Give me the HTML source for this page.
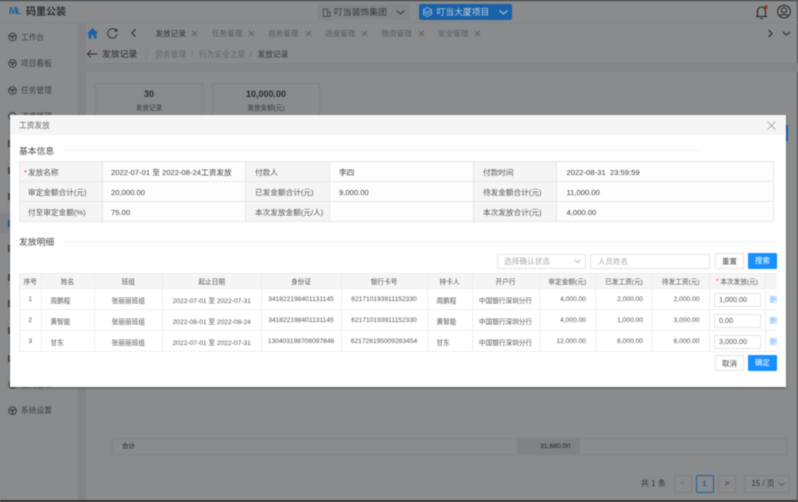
<!DOCTYPE html>
<html lang="zh"><head><meta charset="utf-8"><style>
*{box-sizing:border-box}
html,body{margin:0;padding:0}
body{width:798px;height:502px;overflow:hidden;background:#8a8b8d;position:relative;font-family:"Liberation Sans","Noto Sans CJK SC",sans-serif;color:#333}
#w{position:absolute;left:0;top:0;width:798px;height:502px;filter:blur(.5px);overflow:hidden}
.a{position:absolute;white-space:nowrap}
.c{position:absolute;white-space:nowrap;display:flex;align-items:center;overflow:hidden}
svg{position:absolute;overflow:visible}
.nav{color:#3d3e40;font-size:7.7px;left:21px;line-height:10px}
.ic{fill:none;stroke:#333;stroke-width:.9}
.tab{color:#5a5b5e;font-size:7.6px;top:28px;line-height:11px}
.x{fill:none;stroke:#55565a;stroke-width:.8}
.cell{background:#fdfdfd;border-right:1px solid #e8e8e8;border-bottom:1px solid #e8e8e8;font-size:7.65px;color:#444;padding:1px 0 0 8px}
.lb{background:#f5f5f5;color:#555;padding-left:9px}
.d{background:#fff;border-right:1px solid #eee;border-bottom:1.5px solid #eee;font-size:6.65px;color:#555;justify-content:center;padding:1px 0 0}
.h{background:#f5f5f5;color:#555;padding:0}
.r{justify-content:flex-end;padding-right:9px}
.l{justify-content:flex-start;padding-left:9px}
.inp{position:absolute;left:714px;width:47px;height:14px;border:1px solid #e5e5e5;border-radius:1px;font-size:7.2px;color:#555;padding-left:4px;line-height:12px;background:#fff}
.btn{position:absolute;width:29px;height:16px;font-size:7.5px;text-align:center;line-height:15px;border-radius:1px}
.w{left:715px;border:1px solid #e3e3e3;color:#444;background:#fff}
.b{left:748px;background:#1890ff;color:#fff;line-height:16px}
.del{border-right:0;justify-content:flex-start;padding-left:4px;color:#63b2f5;font-size:7.6px}
</style></head><body><div id="w">
<div class="a" style="left:0;top:0;width:798px;height:1px;background:#333"></div>
<div class="a" style="left:0;top:500px;width:798px;height:2px;background:#333"></div>
<div class="a" style="left:797px;top:0;width:1px;height:502px;background:#444"></div>
<div class="a" style="left:0;top:22px;width:798px;height:1px;background:#848587"></div>
<div class="a" style="left:78px;top:23px;width:8px;height:477px;background:#838487"></div>
<div class="a" style="left:78px;top:63px;width:720px;height:9px;background:#838487"></div>
<div class="a" style="left:78px;top:23px;width:1px;height:477px;background:#808184"></div>

<!-- logo -->
<div class="a" style="left:9px;top:7px;font-size:10px;font-weight:700;color:#1a5f9e;letter-spacing:-.8px;line-height:10px">M<span style="font-size:8px">L</span></div>
<div class="a" style="left:26px;top:6px;font-size:10px;font-weight:700;color:#2c2d30;line-height:13px">码里公装</div>

<!-- top selects -->
<div class="a" style="left:318px;top:4px;width:91px;height:16px;background:#848587;border-radius:2px"></div>
<svg style="left:322px;top:8px" width="9" height="9" fill="none" stroke="#444" stroke-width=".8"><path d="M1.5 8.5V1h4v7.500M5.500 4H8v4.500M.5 8.500h8"/></svg>
<div class="a" style="left:334px;top:6px;font-size:8.800px;color:#37383b;line-height:13px">叮当装饰集团</div>
<svg style="left:396px;top:10px" width="9" height="5" fill="none" stroke="#3a3b3e"><path d="M.5.500l4 3.500 4-3.500"/></svg>
<div class="a" style="left:419px;top:4px;width:93px;height:16px;background:#1a62a8;border-radius:2px"></div>
<svg style="left:423px;top:7px" width="9" height="10" fill="none" stroke="#8fb4d8" stroke-width=".9"><path d="M4.500.5l4 2v5l-4 2-4-2v-5zM.5 5l4 2 4-2M.5 3l4 2 4-2"/></svg>
<div class="a" style="left:436.500px;top:6px;font-size:8.800px;color:#c3cfdb;line-height:13px">叮当大厦项目</div>
<svg style="left:499px;top:10px" width="9" height="5" fill="none" stroke="#c3cfdb"><path d="M.5.500l4 3.500 4-3.500"/></svg>

<!-- bell + user -->
<svg style="left:755px;top:4px" width="14" height="16" fill="none" stroke="#222" stroke-width="1.100"><path d="M1 12.500h11M2.500 12.500V7a4 4 0 0 1 8 0v5.500M5 14.500h3"/><circle cx="11" cy="3" r="1.700" fill="#b32025" stroke="none"/></svg>
<svg style="left:777px;top:5px" width="14" height="14" fill="none" stroke="#222" stroke-width="1"><circle cx="7" cy="6.700" r="6.300"/><circle cx="7" cy="5.200" r="2.500"/><path d="M2.800 11.200c1-2.300 7.400-2.300 8.400 0"/></svg>

<!-- sidebar -->
<svg style="left:8px;top:33px" width="9" height="9"><circle class="ic" cx="4.500" cy="4" r="3.800"/><path class="ic" d="M2.500 3h4L4.500 5.500z"/></svg><div class="a nav" style="top:33px">工作台</div>
<svg style="left:8px;top:59px" width="9" height="9"><circle class="ic" cx="4.500" cy="4.500" r="3.800"/><path class="ic" d="M2.500 3.500h4L4.500 6z"/></svg><div class="a nav" style="top:59px">项目看板</div>
<svg style="left:8px;top:86px" width="9" height="9"><circle class="ic" cx="4.500" cy="4.500" r="3.800"/><path class="ic" d="M2.500 3.500h4L4.500 6z"/></svg><div class="a nav" style="top:86px">任务管理</div>
<svg style="left:8px;top:112px" width="9" height="9"><circle class="ic" cx="4.500" cy="4.500" r="3.800"/></svg><div class="a nav" style="top:112px">进度管理</div>
<div class="a" style="left:0;top:213px;width:78px;height:20px;background:#828386"></div>
<div class="a" style="left:8px;top:140px;width:2px;height:7px;background:#444"></div>
<div class="a" style="left:8px;top:167px;width:2px;height:7px;background:#444"></div>
<div class="a" style="left:8px;top:193px;width:2px;height:7px;background:#444"></div>
<div class="a" style="left:8px;top:220px;width:2px;height:7px;background:#1a5f9e"></div>
<div class="a" style="left:8px;top:245px;width:2px;height:7px;background:#444"></div>
<div class="a" style="left:8px;top:274px;width:2px;height:7px;background:#444"></div>
<div class="a" style="left:8px;top:300px;width:2px;height:7px;background:#444"></div>
<div class="a" style="left:8px;top:327px;width:2px;height:7px;background:#444"></div>
<div class="a" style="left:8px;top:355px;width:2px;height:7px;background:#444"></div>
<svg style="left:8px;top:380px" width="9" height="9"><circle class="ic" cx="4.500" cy="4.500" r="3.800"/></svg><div class="a nav" style="top:380px">合同管理</div>
<svg style="left:8px;top:406px" width="9" height="9"><circle class="ic" cx="4.500" cy="4.700" r="3.800"/><path class="ic" d="M2.500 3.700h4L4.500 6zM4.500 6v2.200"/></svg><div class="a nav" style="top:406px">系统设置</div>

<!-- tabs row -->
<svg style="left:86.500px;top:27.500px" width="11" height="11" fill="#1a62a8"><path d="M5.500 0L0 5.300h1.500V10.500h2.800V7.200h2.400v3.300h2.800V5.300H11z"/></svg>
<svg style="left:106.500px;top:27.500px" width="11" height="11" fill="none" stroke="#333" stroke-width="1"><path d="M9.500 3A4.700 4.700 0 1 0 10 6.500M9.800.8V3.300H7.300"/></svg>
<svg style="left:130.500px;top:29px" width="6" height="8" fill="none" stroke="#222" stroke-width="1"><path d="M4.500 .2L1 4l3.500 3.800"/></svg>
<div class="a tab" style="left:155.500px;color:#333">发放记录</div><svg style="left:192px;top:31px" width="5" height="5"><path class="x" d="M0 0l5 5M5 0l-5 5"/></svg>
<div class="a tab" style="left:212px">任务管理</div><svg style="left:249px;top:31px" width="5" height="5"><path class="x" d="M0 0l5 5M5 0l-5 5"/></svg>
<div class="a tab" style="left:268px">商务管理</div><svg style="left:305.500px;top:31px" width="5" height="5"><path class="x" d="M0 0l5 5M5 0l-5 5"/></svg>
<div class="a tab" style="left:325px">进度管理</div><svg style="left:362px;top:31px" width="5" height="5"><path class="x" d="M0 0l5 5M5 0l-5 5"/></svg>
<div class="a tab" style="left:381.500px">物资管理</div><svg style="left:418.500px;top:31px" width="5" height="5"><path class="x" d="M0 0l5 5M5 0l-5 5"/></svg>
<div class="a tab" style="left:438px">安全管理</div><svg style="left:475px;top:31px" width="5" height="5"><path class="x" d="M0 0l5 5M5 0l-5 5"/></svg>
<svg style="left:768px;top:30px" width="5" height="7" fill="none" stroke="#222" stroke-width="1"><path d="M.5 0L4 3.500 .5 7"/></svg>
<svg style="left:783px;top:32px" width="7" height="4" fill="none" stroke="#222" stroke-width="1"><path d="M0 0l3.500 3L7 0"/></svg>

<!-- breadcrumb row -->
<svg style="left:86.500px;top:50px" width="11" height="8" fill="none" stroke="#2a2b2e" stroke-width=".9"><path d="M10.500 4H.7M4 .2L.5 4 4 7.800"/></svg>
<div class="a" style="left:102px;top:47.500px;font-size:8.800px;color:#2c2d30;line-height:13px">发放记录</div>
<div class="a" style="left:146px;top:47px;width:1px;height:13px;background:#7f8083"></div>
<div class="a" style="left:155.300px;top:48.500px;font-size:7.700px;color:#636467;line-height:11px">劳务管理</div>
<div class="a" style="left:191px;top:48.500px;font-size:7.700px;color:#636467;line-height:11px">/</div>
<div class="a" style="left:199px;top:48.500px;font-size:7.700px;color:#636467;line-height:11px">行为安全之星</div>
<div class="a" style="left:249.500px;top:48.500px;font-size:7.700px;color:#636467;line-height:11px">/</div>
<div class="a" style="left:257.500px;top:48.500px;font-size:7.700px;color:#333;line-height:11px">发放记录</div>

<!-- stat cards -->
<div class="a" style="left:95px;top:83px;width:108px;height:40px;border:1px solid #808184"></div>
<div class="a" style="left:212px;top:83px;width:108px;height:40px;border:1px solid #808184"></div>
<div class="a" style="left:95px;top:89px;width:108px;text-align:center;font-size:9px;font-weight:700;color:#2c2d30;line-height:10px">30</div>
<div class="a" style="left:212px;top:89px;width:108px;text-align:center;font-size:9px;font-weight:700;color:#2c2d30;line-height:10px">10,000.00</div>
<div class="a" style="left:95px;top:104px;width:108px;text-align:center;font-size:6.600px;color:#3a3b3e;line-height:10px">发放记录</div>
<div class="a" style="left:212px;top:104px;width:108px;text-align:center;font-size:6.600px;color:#3a3b3e;line-height:10px">发放金额(元)</div>
<div class="a" style="left:786px;top:125px;width:2px;height:16px;background:#1a62a8"></div>

<!-- background footer -->
<div class="a" style="left:112px;top:438px;width:676px;height:17px;border:1px solid #818285"></div>
<div class="a" style="left:517px;top:439px;width:63px;height:15px;background:#818285"></div>
<div class="a" style="left:122px;top:442px;font-size:6.500px;color:#222;line-height:10px">合计</div>
<div class="a" style="left:540px;top:442px;font-size:6.800px;color:#222;line-height:10px">31,680.00</div>
<div class="a" style="left:641px;top:478px;font-size:8px;color:#333;line-height:12px">共 1 条</div>
<div class="a" style="left:673.500px;top:475px;width:18px;height:18px;border:1px solid #808184;border-radius:2px;text-align:center;font-size:8px;line-height:15px;color:#707174">&lt;</div>
<div class="a" style="left:695.500px;top:475px;width:18px;height:18px;border:1px solid #1a62a8;border-radius:2px;text-align:center;font-size:7.500px;font-weight:700;line-height:16px;color:#1a62a8">1</div>
<div class="a" style="left:718px;top:475px;width:18px;height:18px;border:1px solid #808184;border-radius:2px;text-align:center;font-size:8px;line-height:15px;color:#333">&gt;</div>
<div class="a" style="left:744px;top:475px;width:46px;height:18px;border:1px solid #808184;border-radius:2px"></div>
<div class="a" style="left:751.500px;top:478px;font-size:7.800px;color:#333;line-height:12px">15 / 页</div>
<svg style="left:778px;top:482px" width="7" height="4" fill="none" stroke="#555" stroke-width=".8"><path d="M.5.500L3.500 3.500 6.500.5"/></svg>

<!-- modal -->
<div class="a" style="left:10px;top:115px;width:776px;height:272px;background:#fff;box-shadow:0 1px 2px rgba(40,40,40,.6)"></div>
<div class="a" style="left:10px;top:115px;width:776px;height:20px;background:#f5f5f5"></div>
<div class="a" style="left:19px;top:120px;font-size:7.700px;color:#666;line-height:11px">工资发放</div>
<svg style="left:767px;top:121px" width="9" height="9" fill="none" stroke="#999" stroke-width=".8"><path d="M.5.500l8 8M8.500.500l-8 8"/></svg>

<div class="a" style="left:19px;top:145px;font-size:8.800px;color:#444;line-height:12px">基本信息</div>
<div class="a" style="left:63px;top:150px;width:639px;height:1px;background:#f1f1f1"></div>

<!-- basic table -->
<div class="a" style="left:19px;top:161px;width:755px;height:61px;border-top:1px solid #e8e8e8;border-left:1px solid #e8e8e8"></div>
<div class="c cell lb" style="left:20px;top:162px;width:83px;height:20px;padding-left:4px"><span style="color:#e33;width:4px">*</span>发放名称</div>
<div class="c cell" style="left:103px;top:162px;width:143px;height:20px">2022-07-01 至 2022-08-24工资发放</div>
<div class="c cell lb" style="left:246px;top:162px;width:84px;height:20px">付款人</div>
<div class="c cell" style="left:330px;top:162px;width:144px;height:20px;padding-left:9px">李四</div>
<div class="c cell lb" style="left:474px;top:162px;width:83px;height:20px">付款时间</div>
<div class="c cell" style="left:557px;top:162px;width:217px;height:20px;padding-left:9.500px">2022-08-31 &nbsp;23:59:59</div>
<div class="c cell lb" style="left:20px;top:182px;width:83px;height:20px;padding-left:8px">审定金额合计(元)</div>
<div class="c cell" style="left:103px;top:182px;width:143px;height:20px">20,000.00</div>
<div class="c cell lb" style="left:246px;top:182px;width:84px;height:20px">已发金额合计(元)</div>
<div class="c cell" style="left:330px;top:182px;width:144px;height:20px;padding-left:9px">9,000.00</div>
<div class="c cell lb" style="left:474px;top:182px;width:83px;height:20px">待发金额合计(元)</div>
<div class="c cell" style="left:557px;top:182px;width:217px;height:20px;padding-left:9.500px">11,000.00</div>
<div class="c cell lb" style="left:20px;top:202px;width:83px;height:20px;padding-left:8px">付至审定金额(%)</div>
<div class="c cell" style="left:103px;top:202px;width:143px;height:20px">75.00</div>
<div class="c cell lb" style="left:246px;top:202px;width:84px;height:20px">本次发放金额(元/人)</div>
<div class="c cell" style="left:330px;top:202px;width:144px;height:20px"></div>
<div class="c cell lb" style="left:474px;top:202px;width:83px;height:20px">本次发放合计(元)</div>
<div class="c cell" style="left:557px;top:202px;width:217px;height:20px;padding-left:9.500px">4,000.00</div>

<div class="a" style="left:19px;top:236px;font-size:8.800px;color:#444;line-height:12px">发放明细</div>
<div class="a" style="left:63px;top:241px;width:714px;height:1px;background:#f1f1f1"></div>

<!-- filters -->
<div class="a" style="left:497px;top:253.500px;width:89px;height:15.500px;border:1px solid #e3e3e3;border-radius:1px;font-size:7.700px;color:#aaa;padding-left:6px;line-height:14px">选择确认状态</div>
<svg style="left:574px;top:259px" width="7" height="4" fill="none" stroke="#aaa" stroke-width=".8"><path d="M.5.500L3.500 3.500 6.500.5"/></svg>
<div class="a" style="left:590px;top:253.500px;width:120px;height:15.500px;border:1px solid #e3e3e3;border-radius:1px;font-size:7.500px;color:#aaa;padding-left:7px;line-height:14px">人员姓名</div>
<div class="btn w" style="top:253px">重置</div>
<div class="btn b" style="top:253px">搜索</div>

<!-- detail table -->
<div class="a" style="left:19px;top:273px;width:758px;height:79px;border-top:1px solid #eee;border-left:1px solid #eee"></div>
<div class="c d h" style="left:20px;top:274px;width:21.500px;height:15px">序号</div>
<div class="c d h" style="left:41.500px;top:274px;width:53px;height:15px">姓名</div>
<div class="c d h" style="left:94.500px;top:274px;width:68.500px;height:15px">班组</div>
<div class="c d h" style="left:163px;top:274px;width:98.500px;height:15px">起止日期</div>
<div class="c d h" style="left:261.500px;top:274px;width:80px;height:15px">身份证</div>
<div class="c d h" style="left:341.500px;top:274px;width:86px;height:15px">银行卡号</div>
<div class="c d h" style="left:427.500px;top:274px;width:45px;height:15px">持卡人</div>
<div class="c d h" style="left:472.500px;top:274px;width:67px;height:15px">开户行</div>
<div class="c d h" style="left:539.500px;top:274px;width:56.500px;height:15px">审定金额(元)</div>
<div class="c d h" style="left:596px;top:274px;width:57px;height:15px">已发工资(元)</div>
<div class="c d h" style="left:653px;top:274px;width:56.500px;height:15px">待发工资(元)</div>
<div class="c d h" style="left:709.500px;top:274px;width:56px;height:15px"><span style="color:#e33">*&nbsp;</span>本次发放(元)</div>
<div class="c d h" style="left:765.500px;top:274px;width:11.500px;height:15px;border-right:0"></div>

<div class="c d" style="left:20px;top:289px;width:21.500px;height:21px">1</div>
<div class="c d l" style="left:41.500px;top:289px;width:53px;height:21px">周鹏程</div>
<div class="c d" style="left:94.500px;top:289px;width:68.500px;height:21px">张丽丽班组</div>
<div class="c d" style="left:163px;top:289px;width:98.500px;height:21px">2022-07-01 至 2022-07-31</div>
<div class="c d" style="left:261.500px;top:289px;width:80px;height:21px">341822198401131145</div>
<div class="c d" style="left:341.500px;top:289px;width:86px;height:21px">621710193911152330</div>
<div class="c d l" style="left:427.500px;top:289px;width:45px;height:21px">周鹏程</div>
<div class="c d" style="left:472.500px;top:289px;width:67px;height:21px">中国银行深圳分行</div>
<div class="c d r" style="left:539.500px;top:289px;width:56.500px;height:21px">4,000.00</div>
<div class="c d r" style="left:596px;top:289px;width:57px;height:21px">2,000.00</div>
<div class="c d r" style="left:653px;top:289px;width:56.500px;height:21px">2,000.00</div>
<div class="c d" style="left:709.500px;top:289px;width:56px;height:21px"></div>
<div class="c d del" style="left:765.500px;top:289px;width:11.500px;height:21px">删除</div>

<div class="c d" style="left:20px;top:310px;width:21.500px;height:21px">2</div>
<div class="c d l" style="left:41.500px;top:310px;width:53px;height:21px">黄智能</div>
<div class="c d" style="left:94.500px;top:310px;width:68.500px;height:21px">张丽丽班组</div>
<div class="c d" style="left:163px;top:310px;width:98.500px;height:21px">2022-08-01 至 2022-08-24</div>
<div class="c d" style="left:261.500px;top:310px;width:80px;height:21px">341822198401131145</div>
<div class="c d" style="left:341.500px;top:310px;width:86px;height:21px">621710193911152330</div>
<div class="c d l" style="left:427.500px;top:310px;width:45px;height:21px">黄智能</div>
<div class="c d" style="left:472.500px;top:310px;width:67px;height:21px">中国银行深圳分行</div>
<div class="c d r" style="left:539.500px;top:310px;width:56.500px;height:21px">4,000.00</div>
<div class="c d r" style="left:596px;top:310px;width:57px;height:21px">1,000.00</div>
<div class="c d r" style="left:653px;top:310px;width:56.500px;height:21px">3,000.00</div>
<div class="c d" style="left:709.500px;top:310px;width:56px;height:21px"></div>
<div class="c d del" style="left:765.500px;top:310px;width:11.500px;height:21px">删除</div>

<div class="c d" style="left:20px;top:331px;width:21.500px;height:21px">3</div>
<div class="c d l" style="left:41.500px;top:331px;width:53px;height:21px">甘东</div>
<div class="c d" style="left:94.500px;top:331px;width:68.500px;height:21px">张丽丽班组</div>
<div class="c d" style="left:163px;top:331px;width:98.500px;height:21px">2022-07-01 至 2022-07-31</div>
<div class="c d" style="left:261.500px;top:331px;width:80px;height:21px">130403198708097846</div>
<div class="c d" style="left:341.500px;top:331px;width:86px;height:21px">621726195009263454</div>
<div class="c d l" style="left:427.500px;top:331px;width:45px;height:21px">甘东</div>
<div class="c d" style="left:472.500px;top:331px;width:67px;height:21px">中国银行深圳分行</div>
<div class="c d r" style="left:539.500px;top:331px;width:56.500px;height:21px">12,000.00</div>
<div class="c d r" style="left:596px;top:331px;width:57px;height:21px">6,000.00</div>
<div class="c d r" style="left:653px;top:331px;width:56.500px;height:21px">6,000.00</div>
<div class="c d" style="left:709.500px;top:331px;width:56px;height:21px"></div>
<div class="c d del" style="left:765.500px;top:331px;width:11.500px;height:21px">删除</div>

<div class="inp" style="top:292.500px">1,000.00</div>
<div class="inp" style="top:313.500px">0.00</div>
<div class="inp" style="top:335px">3,000.00</div>

<div class="btn w" style="top:355px">取消</div>
<div class="btn b" style="top:355px">确定</div>
</div></body></html>
